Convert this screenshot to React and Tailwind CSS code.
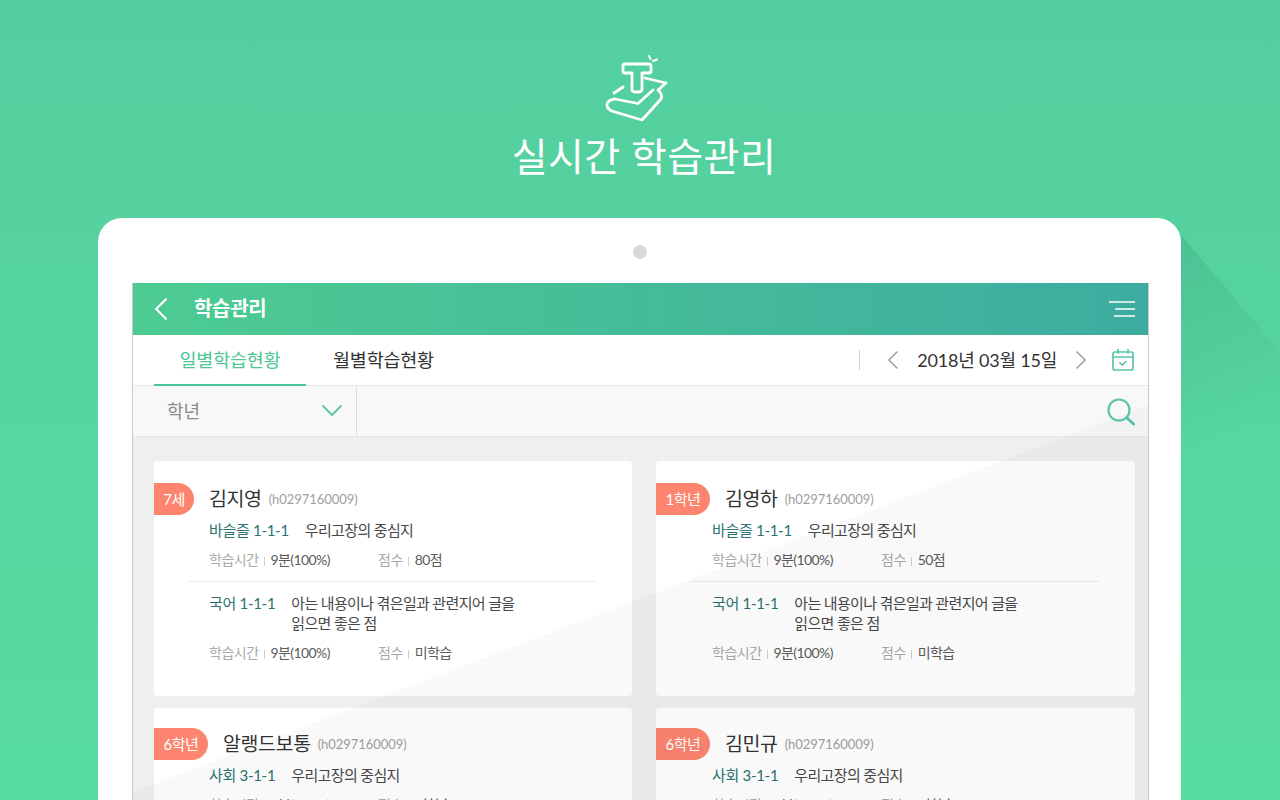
import React from "react";

const FONT = "font-['Lato','Noto_Sans_CJK_KR',sans-serif]";

const CARDS = [
    {
        badge: "7세",
        badgeWidth: "w-10",
        bodyPad: "pl-[55px]",
        top: "pt-[22px]",
        name: "김지영",
        lessons: [
            { subject: "바슬즐 1-1-1", title: ["우리고장의 중심지"], score: "80점" },
            { subject: "국어 1-1-1", title: ["아는 내용이나 겪은일과 관련지어 글을", "읽으면 좋은 점"], score: "미학습" },
        ],
    },
    {
        badge: "1학년",
        badgeWidth: "w-[54px]",
        bodyPad: "pl-14",
        top: "pt-[22px]",
        name: "김영하",
        lessons: [
            { subject: "바슬즐 1-1-1", title: ["우리고장의 중심지"], score: "50점" },
            { subject: "국어 1-1-1", title: ["아는 내용이나 겪은일과 관련지어 글을", "읽으면 좋은 점"], score: "미학습" },
        ],
    },
    {
        badge: "6학년",
        badgeWidth: "w-[54px]",
        bodyPad: "pl-[55px]",
        top: "pt-5",
        name: "알랭드보통",
        lessons: [{ subject: "사회 3-1-1", title: ["우리고장의 중심지"], score: "미학습" }],
    },
    {
        badge: "6학년",
        badgeWidth: "w-[54px]",
        bodyPad: "pl-14",
        top: "pt-5",
        name: "김민규",
        lessons: [{ subject: "사회 3-1-1", title: ["우리고장의 중심지"], score: "미학습" }],
    },
];

const Logo = () => (
    <svg viewBox="0 0 160 90" className="w-40 h-[90px]" fill="none" stroke="white" strokeWidth="2.8" strokeLinejoin="round" strokeLinecap="round">
        {/* stamp */}
        <path d="M65 24 H89 Q91 24 91 26 V31 Q91 33 89 33 H82 V49 Q82 52 79 52 H75 Q72 52 72 49 V33 H65 Q63 33 63 31 V26 Q63 24 65 24 Z" />
        <path d="M89 16 L90.5 19 M93 21 L97 19.5" strokeWidth="2" />
        {/* book */}
        <path d="M54 53 L63 47" />
        <path d="M85 38 L106 43 L98 50 Q103 54 101 59 L82 80 L55 72 Q47 70 47 65 Q47 60 55 59 L78 63.5 L93 50" />
    </svg>
);

const Chevron = ({ dir, className, weight = 1.6 }) => (
    <svg viewBox="0 0 12 20" className={className} fill="none" stroke="currentColor" strokeWidth={weight} strokeLinecap="round" strokeLinejoin="round">
        <path d={dir === "left" ? "M11 1 L2 10 L11 19" : "M1 1 L10 10 L1 19"} />
    </svg>
);

const Stat = ({ label, value, className }) => (
    <div className={`flex items-center ${className}`}>
        <span className="text-sm tracking-[-0.5px] text-[#a9a9a9]">{label}</span>
        <span className="ml-[5px] mr-1.5 mt-[3px] h-[9px] w-px bg-[#cfcfcf]" />
        <span className="text-sm tracking-[-0.6px] text-[#5c5c5c]">{value}</span>
    </div>
);

const Lesson = ({ lesson }) => (
    <div className="flex flex-col">
        <div className="flex text-[15px] leading-5">
            <span className="mr-4 tracking-[-0.3px] text-[#2b7272] whitespace-nowrap">{lesson.subject}</span>
            <div className="tracking-[-0.65px] text-[#484848]">
                {lesson.title.map((line) => (
                    <div key={line}>{line}</div>
                ))}
            </div>
        </div>
        <div className="mt-2.5 flex h-5 items-center">
            <Stat label="학습시간" value="9분(100%)" className="w-[169px]" />
            <Stat label="점수" value={lesson.score} />
        </div>
    </div>
);

const Card = ({ card }) => (
    <div className={`h-[235px] rounded bg-white overflow-hidden ${card.top}`}>
        <div className="flex items-center">
            <div className={`flex h-8 items-center justify-center rounded-r-full bg-[#fd8570] text-[15px] tracking-[-0.5px] text-white ${card.badgeWidth}`}>
                {card.badge}
            </div>
            <span className="ml-[15px] text-[19.5px] tracking-[-0.4px] text-[#333]">{card.name}</span>
            <span className="ml-[7px] mt-0.5 text-[13px] tracking-[-0.05px] text-[#a0a0a0]">(h0297160009)</span>
        </div>
        <div className={`mt-[5px] ${card.bodyPad}`}>
            <Lesson lesson={card.lessons[0]} />
        </div>
        {card.lessons[1] && (
            <>
                <div className="ml-[34px] mr-9 mt-[11px] mb-[11px] h-px bg-[#ececec]" />
                <div className={card.bodyPad}>
                    <Lesson lesson={card.lessons[1]} />
                </div>
            </>
        )}
    </div>
);

const App = () => {
    return (
        <div className={`relative flex h-[800px] w-[1280px] flex-col items-center overflow-hidden bg-[linear-gradient(180deg,#54ce9f,#57dca0)] ${FONT}`}>
            {/* Long shadow behind the tablet */}
            <div className="absolute inset-0 bg-[linear-gradient(155deg,rgba(20,90,70,0.12)_58%,rgba(20,90,70,0)_72%)] [clip-path:polygon(1181px_235px,1280px_352px,1280px_800px,1181px_800px)]" />

            <div className="relative mt-10 flex flex-col items-center">
                <Logo />
                <h1 className="mt-[-2px] ml-2 text-[39px] leading-[56px] font-normal tracking-[0.4px] text-white">실시간 학습관리</h1>
            </div>

            {/* Tablet */}
            <div className="relative mt-[34px] ml-[-1px] flex w-[1083px] flex-1 flex-col items-center rounded-t-[24px] bg-white pt-[27px]">
                <div className="size-[14px] rounded-full bg-[#d9d9d9]" />

                <div className="relative mt-6 ml-[2px] flex w-[1017px] flex-1 flex-col border-x border-[#c9c9c9] bg-[#efefef]">
                    {/* Header */}
                    <div className="flex h-[52px] items-center justify-between bg-[linear-gradient(90deg,#4dcc92,#3daca0)] pl-[21px] pr-[13px] text-white">
                        <div className="flex items-center gap-[27px]">
                            <Chevron dir="left" weight={2} className="h-[22px] w-[13px]" />
                            <span className="mb-0.5 text-xl font-bold tracking-[-0.3px]">학습관리</span>
                        </div>
                        <svg viewBox="0 0 26 16" className="h-4 w-[26px]" stroke="white" strokeWidth="1.6">
                            <path d="M0 1 H26 M6 8 H26 M5 15 H26" />
                        </svg>
                    </div>

                    {/* Tabs */}
                    <div className="flex h-[51px] items-stretch justify-between border-b border-[#e6e6e6] bg-white pl-[21px] pr-[13px]">
                        <div className="flex">
                            <div className="flex w-[152px] items-center justify-center border-b-2 border-[#4cc795] mb-[-1px] pt-[2px] text-[18.5px] tracking-[-0.2px] text-[#4cc795]">
                                일별학습현황
                            </div>
                            <div className="ml-[27px] flex items-center pt-[2px] text-[18.5px] tracking-[-0.2px] text-[#333]">월별학습현황</div>
                        </div>
                        <div className="flex items-center">
                            <div className="h-5 w-px bg-[#cfcfcf]" />
                            <Chevron dir="left" className="ml-[27px] h-[18px] w-[11px] text-[#999]" />
                            <span className="mx-[19px] text-lg tracking-[-0.2px] text-[#333]">2018년 03월 15일</span>
                            <Chevron dir="right" className="h-[18px] w-[11px] text-[#999]" />
                            <svg viewBox="0 0 24 24" className="ml-[24px] size-6" fill="none" stroke="#5cc5a9" strokeWidth="1.7" strokeLinecap="round" strokeLinejoin="round">
                                <rect x="2" y="4" width="20" height="18" rx="2" />
                                <path d="M2 9 H22 M7 1.5 V5 M17 1.5 V5 M9 15 L11.5 17 L15 13.5" />
                            </svg>
                        </div>
                    </div>

                    {/* Filter */}
                    <div className="flex h-[51px] items-stretch justify-between border-b border-[#e6e6e6] bg-[#f8f8f8] pr-[13px]">
                        <div className="flex w-[224px] items-center justify-between border-r border-[#dedede] pl-[34px] pr-[14px]">
                            <span className="text-lg text-[#8a8a8a]">학년</span>
                            <svg viewBox="0 0 20 12" className="h-3 w-5" fill="none" stroke="#5cc5a9" strokeWidth="1.8" strokeLinecap="round" strokeLinejoin="round">
                                <path d="M1 1 L10 10 L19 1" />
                            </svg>
                        </div>
                        <svg viewBox="0 0 28 28" className="size-7 self-center mt-0.5" fill="none" stroke="#5cc5a9" strokeWidth="2.2" strokeLinecap="round">
                            <circle cx="12" cy="12" r="10.5" />
                            <path d="M20 20 L26.5 26" strokeWidth="3" />
                        </svg>
                    </div>

                    {/* Cards */}
                    <div className="grid grid-cols-[478px_479px] gap-x-6 gap-y-3 pl-[21px] pt-6">
                        {CARDS.map((card) => (
                            <Card key={card.name} card={card} />
                        ))}
                    </div>

                    {/* Diagonal sheen over the screen */}
                    <div className="pointer-events-none absolute inset-0 bg-black/[0.025] [clip-path:polygon(100%_122px,100%_100%,0_100%,0_509px)]" />
                </div>
            </div>
        </div>
    );
};

export default App;
